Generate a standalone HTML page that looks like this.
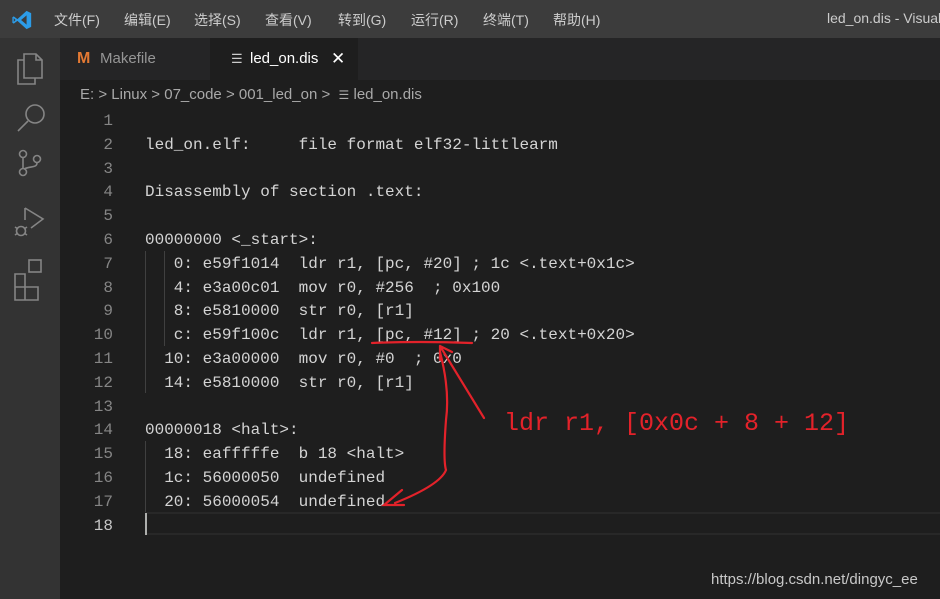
<!DOCTYPE html>
<html><head><meta charset="utf-8"><style>
*{margin:0;padding:0;box-sizing:border-box}
body{width:940px;height:599px;overflow:hidden;background:#1e1e1e;font-family:"Liberation Sans","Noto Sans CJK SC",sans-serif;position:relative}
.title{position:absolute;left:0;top:0;width:940px;height:38px;background:#3c3c3c;color:#ccc;font-size:14px;overflow:hidden}
.title span{position:absolute;top:10px;white-space:nowrap}
.act{position:absolute;left:0;top:38px;width:60px;height:561px;background:#333}
.tabs{position:absolute;left:60px;top:38px;width:880px;height:42px;background:#252526}
.tab{position:absolute;top:0;height:42px;font-size:15px;line-height:42px}
.bc{position:absolute;left:80px;top:86px;font-size:15px;color:#a9a9a9;white-space:pre}
.code{position:absolute;left:0;top:110px;font-family:"Liberation Mono",monospace;font-size:16px;line-height:23.8px;color:#d4d4d4;white-space:pre}
.ln{position:absolute;left:60px;width:53px;text-align:right;color:#858585}
.tx{position:absolute;left:145px}
.wm{position:absolute;left:711px;top:571px;font-size:15px;color:#c8c8c8}
</style></head><body>
<div class="title">
<svg style="position:absolute;left:11px;top:9px" width="22" height="22" viewBox="0 0 24 24"><path d="M17 2 L22 4.5 V19.5 L17 22 L7 13 L3 16 L1.5 15 V9 L3 8 L7 11 Z M17 7 L11 12 L17 17 Z M3 10 V14 L5 12 Z" fill="#2c9ce8"/></svg>
<span style="left:54px">文件(F)</span><span style="left:124px">编辑(E)</span><span style="left:194px">选择(S)</span><span style="left:265px">查看(V)</span><span style="left:338px">转到(G)</span><span style="left:411px">运行(R)</span><span style="left:483px">终端(T)</span><span style="left:553px">帮助(H)</span><span style="left:827px">led_on.dis - Visual</span>
</div>
<div class="act">
<svg width="60" height="320" viewBox="0 0 60 320" fill="none" stroke="#858585" stroke-width="1.6">
<path d="M24 16 H36 L42 22 V40 H24 Z M36 16 V22 H42"/><path d="M24 22 H18 V46 H35 V40"/>
<path d="M35 76 m-9 0 a9 9 0 1 0 18 0 a9 9 0 1 0 -18 0 M28 83 L18 93"/>
<circle cx="23" cy="116" r="3.5"/><circle cx="23" cy="134" r="3.5"/><circle cx="37" cy="121" r="3.5"/><path d="M23 120 V130 M37 125 C37 130 30 128 24 131"/>
<path d="M25 170 L43 181 L31 190 M25 170 V182"/><circle cx="21" cy="193" r="4.5"/><path d="M15 189 L18 191 M15 197 L18 195 M27 189 L24 191 M27 197 L24 195"/>
<path d="M15 236 H25 V262 H15 Z M15 249 H38 V262 H25 M25 236"/><rect x="29" y="222" width="12" height="12"/>
</svg>
</div>
<div class="tabs">
<div class="tab" style="left:0;width:150px;color:#969696"><span style="position:absolute;left:17px;color:#e37933;font-weight:bold;font-size:16px">M</span><span style="position:absolute;left:40px">Makefile</span></div>
<div class="tab" style="left:150px;width:148px;background:#1e1e1e;color:#fff"><span style="position:absolute;left:21px;color:#ccc;font-size:13px">☰</span><span style="position:absolute;left:40px">led_on.dis</span><span style="position:absolute;left:121px;font-size:17px">✕</span></div>
</div>
<div class="bc">E: &gt; Linux &gt; 07_code &gt; 001_led_on &gt;  <span style="font-size:12px">☰</span> led_on.dis</div>
<div style="position:absolute;left:145px;top:512px;width:795px;height:23px;border-top:2px solid #282828;border-bottom:2px solid #282828"></div>
<div style="position:absolute;left:145px;top:513px;width:2px;height:22px;background:#aeafad"></div>
<div style="position:absolute;left:145px;top:251px;width:1px;height:142px;background:#404040"></div>
<div style="position:absolute;left:164px;top:251px;width:1px;height:95px;background:#404040"></div>
<div style="position:absolute;left:145px;top:441px;width:1px;height:71px;background:#404040"></div>
<div class="code">
<div class="ln" style="top:0">1</div>
<div class="ln" style="top:23.8px">2</div><div class="tx" style="top:23.8px">led_on.elf:     file format elf32-littlearm</div>
<div class="ln" style="top:47.6px">3</div>
<div class="ln" style="top:71.4px">4</div><div class="tx" style="top:71.4px">Disassembly of section .text:</div>
<div class="ln" style="top:95.2px">5</div>
<div class="ln" style="top:119px">6</div><div class="tx" style="top:119px">00000000 &lt;_start&gt;:</div>
<div class="ln" style="top:142.8px">7</div><div class="tx" style="top:142.8px">   0: e59f1014  ldr r1, [pc, #20] ; 1c &lt;.text+0x1c&gt;</div>
<div class="ln" style="top:166.6px">8</div><div class="tx" style="top:166.6px">   4: e3a00c01  mov r0, #256  ; 0x100</div>
<div class="ln" style="top:190.4px">9</div><div class="tx" style="top:190.4px">   8: e5810000  str r0, [r1]</div>
<div class="ln" style="top:214.2px">10</div><div class="tx" style="top:214.2px">   c: e59f100c  ldr r1, [pc, #12] ; 20 &lt;.text+0x20&gt;</div>
<div class="ln" style="top:238px">11</div><div class="tx" style="top:238px">  10: e3a00000  mov r0, #0  ; 0x0</div>
<div class="ln" style="top:261.8px">12</div><div class="tx" style="top:261.8px">  14: e5810000  str r0, [r1]</div>
<div class="ln" style="top:285.6px">13</div>
<div class="ln" style="top:309.4px">14</div><div class="tx" style="top:309.4px">00000018 &lt;halt&gt;:</div>
<div class="ln" style="top:333.2px">15</div><div class="tx" style="top:333.2px">  18: eafffffe  b 18 &lt;halt&gt;</div>
<div class="ln" style="top:357px">16</div><div class="tx" style="top:357px">  1c: 56000050  undefined</div>
<div class="ln" style="top:380.8px">17</div><div class="tx" style="top:380.8px">  20: 56000054  undefined</div>
<div class="ln" style="top:404.6px;color:#c6c6c6">18</div>
</div>
<svg style="position:absolute;left:0;top:0" width="940" height="599" fill="none" stroke="#e3222a" stroke-width="2.2" stroke-linecap="round">
<path d="M372 343 Q420 341 472 343"/>
<path d="M484 418 L440 346 M440 346 L440 360 M440 346 L452 352"/>
<path d="M440 352 Q450 390 446 420 Q443 460 446 470 Q440 485 395 503 M402 490 L384 505 L404 505"/>
</svg>
<div style="position:absolute;left:504px;top:409px;font-family:'Liberation Mono',monospace;font-size:25px;color:#e3222a;white-space:pre">ldr r1, [0x0c + 8 + 12]</div>
<div class="wm">https://blog.csdn.net/dingyc_ee</div>
</body></html>
